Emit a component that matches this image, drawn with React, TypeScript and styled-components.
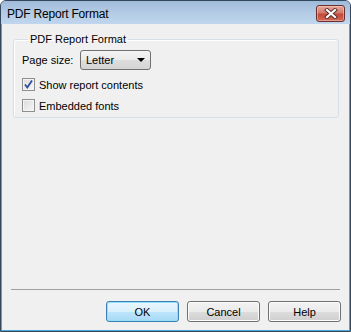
import styled, { createGlobalStyle } from "styled-components";

const GlobalStyle = createGlobalStyle`
  html, body {
    margin: 0;
    padding: 0;
    background: #ffffff;
  }
  * {
    box-sizing: border-box;
  }
`;

const BODY_FONT = `"Liberation Sans", Arial, sans-serif`;

export default function App() {
  return (
    <>
      <GlobalStyle />
      <Window>
        <TitleBar>
          <Title>PDF Report Format</Title>
          <CloseButton aria-label="Close">
            <svg width="14" height="11" viewBox="0 0 14 11">
              <path d="M3 2 L11 9 M11 2 L3 9" stroke="#5a2a2a" strokeWidth="4" strokeLinecap="square" />
              <path d="M3 2 L11 9 M11 2 L3 9" stroke="#ffffff" strokeWidth="2.2" strokeLinecap="square" />
            </svg>
          </CloseButton>
        </TitleBar>

        <Client>
          <GroupBox>
            <Legend>PDF Report Format</Legend>
            <Row>
              <FieldLabel>Page size:</FieldLabel>
              <ComboBox>
                <span>Letter</span>
                <svg width="8" height="4" viewBox="0 0 8 4">
                  <path d="M0 0 H8 L4 4 Z" fill="#000000" />
                </svg>
              </ComboBox>
            </Row>
            <CheckRow>
              <CheckBox $checked>
                <svg width="11" height="11" viewBox="0 0 11 11">
                  <path d="M2 5.5 L4.3 8.5 L9 1.5" stroke="#2e4e9e" strokeWidth="1.8" fill="none" />
                </svg>
              </CheckBox>
              <CheckLabel>Show report contents</CheckLabel>
            </CheckRow>
            <CheckRow>
              <CheckBox />
              <CheckLabel>Embedded fonts</CheckLabel>
            </CheckRow>
          </GroupBox>

          <Spacer />
          <Separator />

          <ButtonRow>
            <DialogButton $primary>OK</DialogButton>
            <DialogButton>Cancel</DialogButton>
            <DialogButton>Help</DialogButton>
          </ButtonRow>
        </Client>
      </Window>
    </>
  );
}

const Window = styled.div`
  width: 351px;
  height: 332px;
  display: flex;
  flex-direction: column;
  border: 1px solid #34475c;
  border-radius: 6px 6px 0 0;
  background: #b9d1ea;
  font-family: ${BODY_FONT};
  overflow: hidden;
`;

const TitleBar = styled.div`
  height: 23px;
  display: flex;
  align-items: center;
  justify-content: space-between;
  padding: 0 5px 0 6px;
  background: linear-gradient(to bottom, #9fbbda 0%, #b4cce6 55%, #c0d6ee 100%);
`;

const Title = styled.span`
  font-size: 12px;
  color: #000000;
  letter-spacing: -0.2px;
  margin-top: 2px;
`;

const CloseButton = styled.div`
  width: 29px;
  height: 17px;
  align-self: flex-start;
  margin-top: 4px;
  display: flex;
  align-items: center;
  justify-content: center;
  border: 1px solid #6a2e2e;
  border-radius: 3px;
  background: linear-gradient(to bottom, #e7a89c 0%, #d27a6b 45%, #c4493a 55%, #cf6a55 100%);
  box-shadow: inset 0 0 0 1px rgba(255, 210, 200, 0.5);
`;

const Client = styled.div`
  flex: 1;
  display: flex;
  flex-direction: column;
  background: #f0f0f0;
  border: 1px solid #48a9de;
  border-top: none;
  padding: 8px 8px 8px 9px;
`;

const GroupBox = styled.fieldset`
  margin: 0 2px 0 2px;
  padding: 4px 8px 1px 8px;
  border: 1px solid #d5dfe5;
  border-radius: 3px;
  box-shadow: inset 1px 1px 0 #ffffff;
`;

const Legend = styled.legend`
  padding: 0 2px;
  margin-left: 6px;
  font-size: 11px;
  line-height: 14px;
  color: #000000;
`;

const Row = styled.div`
  display: flex;
  align-items: center;
  height: 20px;
  margin-bottom: 4px;
`;

const FieldLabel = styled.span`
  width: 58px;
  font-size: 11px;
  color: #000000;
`;

const ComboBox = styled.div`
  width: 71px;
  height: 20px;
  display: flex;
  align-items: center;
  justify-content: space-between;
  padding: 0 5px 0 5px;
  border: 1px solid #707070;
  border-radius: 3px;
  background: linear-gradient(to bottom, #f4f4f4 0%, #ebebeb 50%, #dddddd 51%, #d4d4d4 100%);
  font-size: 11px;
  color: #000000;
`;

const CheckRow = styled.div`
  display: flex;
  align-items: center;
  height: 21px;
`;

const CheckBox = styled.div<{ $checked?: boolean }>`
  width: 13px;
  height: 13px;
  display: flex;
  align-items: center;
  justify-content: center;
  border: 1px solid #8e8f8f;
  background: linear-gradient(135deg, #dcdcdc 0%, #f6f6f6 100%);
  box-shadow: inset 0 0 0 1px #f4f4f4;
  margin-right: 4px;

  svg {
    display: ${(p) => (p.$checked ? "block" : "none")};
  }
`;

const CheckLabel = styled.span`
  font-size: 11px;
  color: #000000;
`;

const Spacer = styled.div`
  flex: 1;
`;

const Separator = styled.div`
  height: 1px;
  background: #a0a0a0;
  margin-right: 1px;
`;

const ButtonRow = styled.div`
  display: flex;
  justify-content: flex-end;
  gap: 8px;
  margin-top: 11px;
`;

const DialogButton = styled.div<{ $primary?: boolean }>`
  width: 73px;
  height: 21px;
  display: flex;
  align-items: center;
  justify-content: center;
  font-size: 11px;
  color: #000000;
  border: 1px solid ${(p) => (p.$primary ? "#3c7fb1" : "#707070")};
  border-radius: 3px;
  background: ${(p) =>
    p.$primary
      ? "linear-gradient(to bottom, #eaf6fd 0%, #d9f0fc 50%, #bee6fd 51%, #a7d9f5 100%)"
      : "linear-gradient(to bottom, #f2f2f2 0%, #ebebeb 50%, #dddddd 51%, #cfcfcf 100%)"};
  box-shadow: inset 0 0 0 1px ${(p) => (p.$primary ? "#94e0fc" : "#fcfcfc")};
`;
